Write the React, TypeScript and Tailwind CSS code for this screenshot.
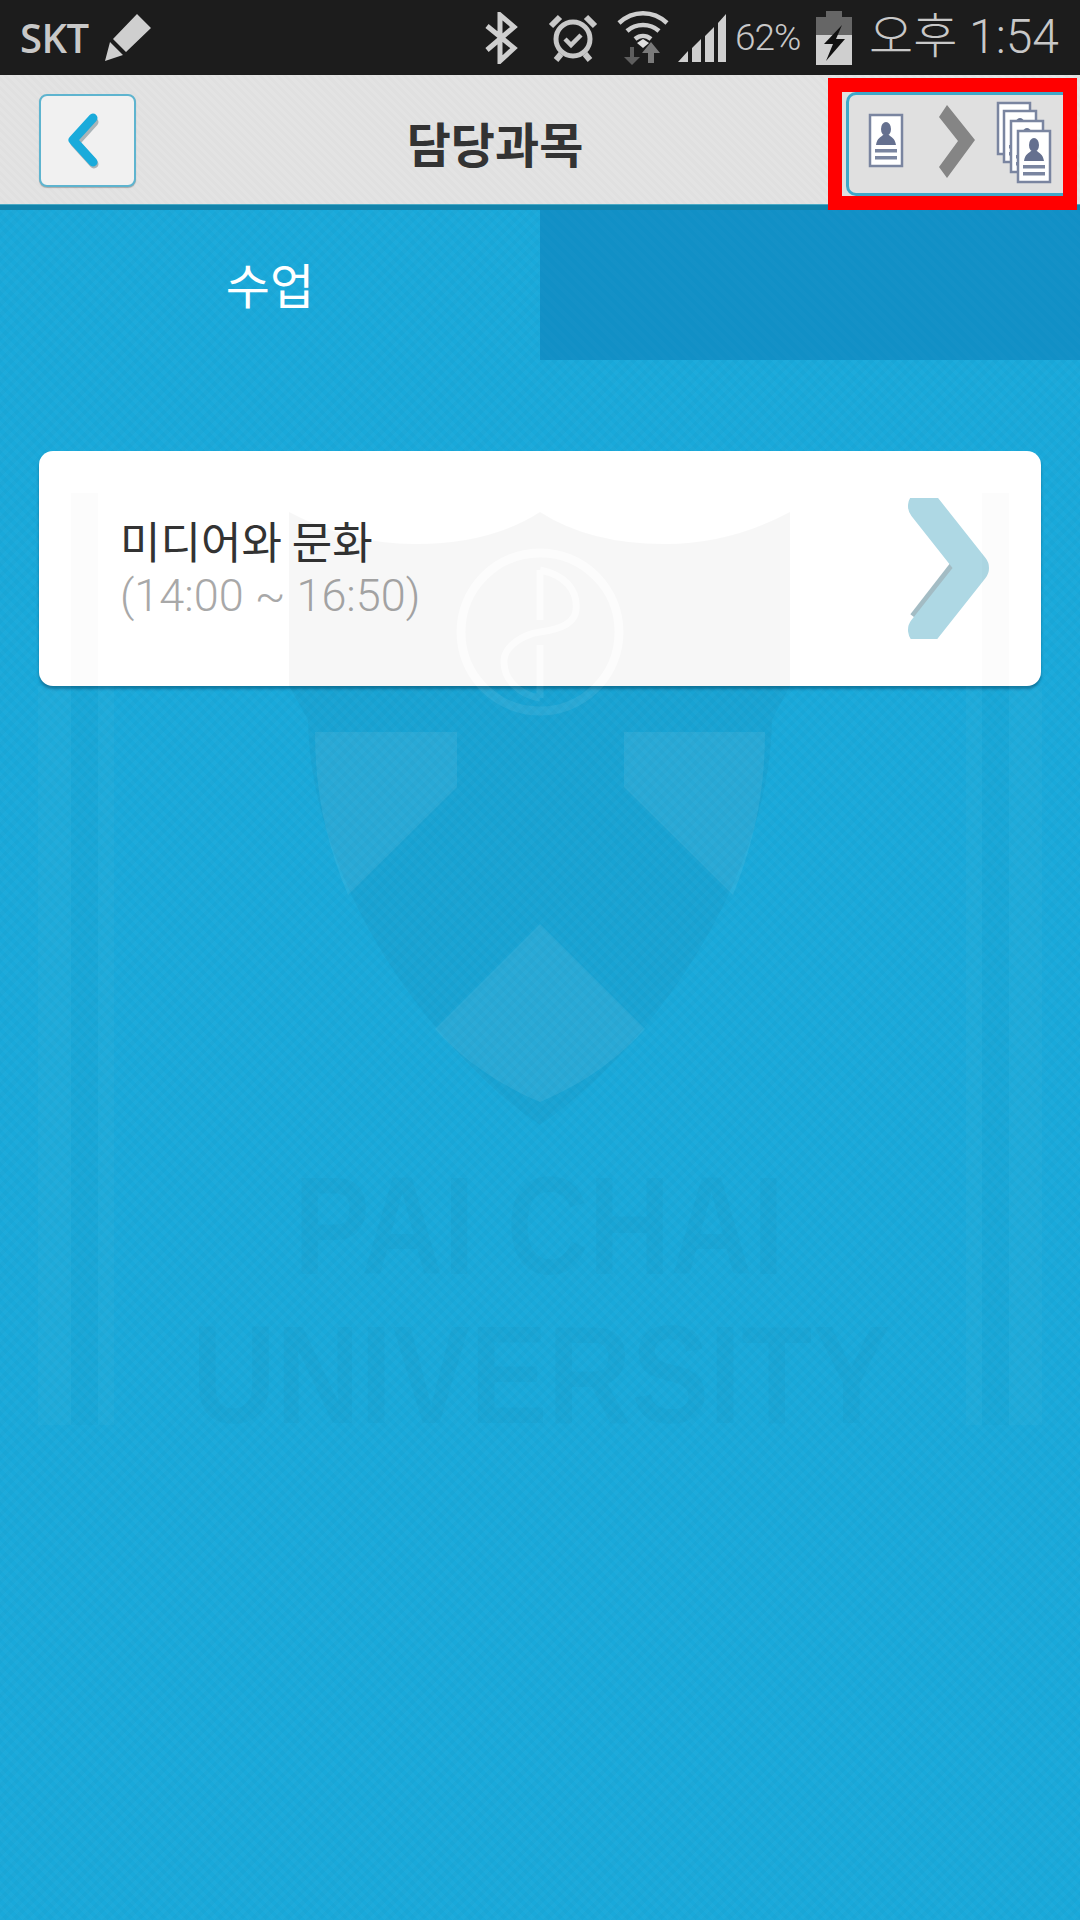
import React from 'react';

const KR = "font-['Noto_Sans_CJK_KR',sans-serif]";

const PersonCard = ({ x, y }: { x: number; y: number }) => (
  <g transform={`translate(${x} ${y})`}>
    <rect x="1" y="1" width="32" height="51" fill="#fff" stroke="#7a85a0" strokeWidth="2.5" />
    <ellipse cx="17" cy="15" rx="5" ry="7" fill="#65708f" />
    <path d="M7 31 C8 24 12 23 14 21 L20 21 C22 23 26 24 27 31 Z" fill="#65708f" />
    <rect x="6" y="35" width="22" height="3.5" fill="#7a85a0" />
    <rect x="6" y="42" width="22" height="3.5" fill="#7a85a0" />
  </g>
);

const EMBLEM_LINES =
  'M540 570 L540 620 M540 570 C565 575 578 590 576 610 C575 625 555 630 540 632 C525 634 505 645 504 660 C503 680 520 695 540 698 M540 645 L540 698';

const Watermark = () => (
  <svg className="absolute left-0 top-0 pointer-events-none" width="1080" height="1920" viewBox="0 0 1080 1920">
    <defs>
      <clipPath id="on-card">
        <rect x="39" y="451" width="1002" height="235" />
      </clipPath>
      <clipPath id="off-card">
        <rect x="0" y="686" width="1080" height="1234" />
      </clipPath>
    </defs>
    {/* side stripes */}
    <g fill="#fff" fillOpacity="0.025">
      <rect x="38" y="686" width="33" height="739" />
      <rect x="98" y="686" width="16" height="739" />
      <rect x="966" y="686" width="16" height="739" />
      <rect x="1009" y="686" width="33" height="739" />
    </g>
    <g fill="#000" fillOpacity="0.012">
      <rect x="71" y="493" width="27" height="932" />
      <rect x="982" y="493" width="27" height="932" />
    </g>
    {/* shield */}
    <path
      d="M289 512 Q350 544 415 544 Q490 544 540 512 Q590 544 665 544 Q730 544 790 512 L790 686 L772 720 C770 880 650 1050 540 1125 C430 1050 310 880 308 720 L289 686 Z"
      fill="#000"
      fillOpacity="0.03"
    />
    <g fill="#fff" fillOpacity="0.07">
      <path d="M315 732 L457 732 L457 787 L348 895 C325 840 315 790 315 732 Z" />
      <path d="M765 732 L624 732 L624 787 L733 895 C755 840 765 790 765 732 Z" />
      <path d="M540 924 L645 1029 C615 1062 580 1085 540 1102 C500 1085 465 1062 435 1029 Z" />
    </g>
    {/* emblem ring, stronger on the white card than on the blue */}
    <g fill="none" stroke="#fff" strokeOpacity="0.6" clipPath="url(#on-card)">
      <circle cx="540" cy="632" r="79" strokeWidth="9" />
      <path d={EMBLEM_LINES} strokeWidth="7" />
    </g>
    <g fill="none" stroke="#fff" strokeOpacity="0.07" clipPath="url(#off-card)">
      <circle cx="540" cy="632" r="79" strokeWidth="9" />
      <path d={EMBLEM_LINES} strokeWidth="7" />
    </g>
    {/* faint name */}
    <g fill="#000" fillOpacity="0.018" fontFamily="'Liberation Sans', sans-serif" fontWeight="700" fontSize="140">
      <text x="294" y="1274" textLength="490" lengthAdjust="spacingAndGlyphs">PAI CHAI</text>
      <text x="192" y="1423" textLength="698" lengthAdjust="spacingAndGlyphs">UNIVERSITY</text>
    </g>
  </svg>
);

const StatusBar = () => (
  <div className="h-[75px] bg-[#1c1c1c] flex items-center text-[#c8c8c8] shrink-0">
    <span className="ml-[20px] w-[71px] text-[40px] font-semibold font-['Open_Sans',sans-serif] leading-none tracking-[-0.5px]">SKT</span>
    <svg className="ml-[14px]" width="46" height="48" viewBox="0 0 46 48">
      <path d="M32 0 L46 14 L21 38 L8 25 Z M5 28 L18 41 L0 47 Z" fill="#cfcfcf" />
    </svg>
    <svg className="ml-[333px]" width="34" height="52" viewBox="0 0 34 52">
      <path d="M3 14 L30 36 L16 49 L16 3 L30 15 L3 38" fill="none" stroke="#cfcfcf" strokeWidth="5" />
    </svg>
    <svg className="ml-[30px]" width="50" height="50" viewBox="0 0 50 50">
      <circle cx="25" cy="26" r="17" fill="none" stroke="#c8c8c8" strokeWidth="5" />
      <path d="M17 26 L23 32 L33 22" fill="none" stroke="#c8c8c8" strokeWidth="4.5" />
      <path d="M3 13 L12 4 M47 13 L38 4 M13 41 L8 47 M37 41 L42 47" stroke="#c8c8c8" strokeWidth="6" />
    </svg>
    <svg className="ml-[19px]" width="52" height="54" viewBox="0 0 52 54">
      <g fill="none" stroke="#cfcfcf" strokeWidth="4.5">
        <path d="M2 12 C16 -1 36 -1 50 12" />
        <path d="M10 20 C19 12 33 12 42 20" />
        <path d="M18 28 C23 24 29 24 34 28" />
      </g>
      <path d="M20 32 L26 28 L32 32 L26 37 Z" fill="#e0e0e0" />
      <path d="M17 36 L17 46 L23 46 L15 54 L7 46 L13 46 L13 36 Z" fill="#5e5e5e" />
      <path d="M31 52 L31 42 L25 42 L34 31 L43 42 L37 42 L37 52 Z" fill="#7a7a7a" />
    </svg>
    <svg className="ml-[9px]" width="48" height="48" viewBox="0 0 48 48">
      <path d="M0 48 L10 48 L10 37 Z M14 48 L23 48 L23 25 L14 34 Z M27 48 L36 48 L36 13 L27 22 Z M40 48 L48 48 L48 0 L40 9 Z" fill="#cfcfcf" />
    </svg>
    <span className="ml-[9px] w-[65px] text-[37px] font-['Roboto',sans-serif] font-light leading-none tracking-[-1px]">62%</span>
    <svg className="ml-[16px]" width="36" height="54" viewBox="0 0 36 54">
      <path d="M10 0 L26 0 L26 6 L36 6 L36 54 L0 54 L0 6 L10 6 Z" fill="#666" />
      <rect x="0" y="24" width="36" height="30" fill="#cfcfcf" />
      <path d="M26 14 L8 33 L17 33 L10 50 L29 28 L20 28 Z" fill="#111" />
    </svg>
    <span className="ml-[17px] mb-[2px] text-[48px] font-['Roboto','Noto_Sans_CJK_KR',sans-serif] font-light leading-none whitespace-nowrap">오후 1:54</span>
  </div>
);

export default function App() {
  return (
    <div className="relative w-[1080px] h-[1920px] overflow-hidden flex flex-col bg-[#19a9da] bg-[repeating-linear-gradient(45deg,rgba(255,255,255,0.018)_0_4px,transparent_4px_8px),repeating-linear-gradient(-45deg,rgba(0,0,0,0.018)_0_4px,transparent_4px_8px)]">
      <StatusBar />

      {/* header */}
      <div className="h-[129px] shrink-0 flex items-center bg-[#e0e0e0] bg-[repeating-linear-gradient(45deg,rgba(255,255,255,0.1)_0_3px,transparent_3px_6px)] pr-[252px]">
        <button className="ml-[39px] mt-[2px] w-[97px] h-[93px] rounded-[8px] border-2 border-[#5eb4cf] bg-[#f1f1f1] flex items-center justify-center shadow-[0_1px_1px_rgba(0,0,0,0.25)]">
          <svg className="mr-[8px]" width="36" height="58" viewBox="0 0 36 58">
            <path d="M27 8 L8 29 L27 50" transform="translate(1 2)" fill="none" stroke="#a9b4b8" strokeWidth="9" strokeLinecap="round" strokeLinejoin="round" />
            <path d="M27 6 L7 28 L27 50" fill="none" stroke="#1aabdb" strokeWidth="9" strokeLinecap="round" strokeLinejoin="round" />
          </svg>
        </button>
        <h1 className={`flex-1 text-center mt-[4px] text-[48px] font-bold text-[#333] ${KR} leading-none pl-[26px]`}>담당과목</h1>
      </div>
      <div className="h-[6px] shrink-0 bg-[#1283ab] border-t border-[#4aa9c4]" />

      {/* tabs */}
      <div className="grid grid-cols-2 h-[150px] shrink-0">
        <div className={`flex items-center justify-center pb-[4px] text-white text-[48px] ${KR}`}>수업</div>
        <div className="bg-[#1190c6] bg-[repeating-linear-gradient(45deg,rgba(255,255,255,0.012)_0_4px,transparent_4px_8px)]" />
      </div>

      {/* course card */}
      <div className="mt-[91px] ml-[39px] w-[1002px] h-[235px] rounded-[14px] bg-white shadow-[0_3px_3px_rgba(0,60,90,0.45)] flex items-center justify-between pl-[81px] pr-[50px] shrink-0">
        <div className="flex flex-col">
          <span className={`text-[44px] leading-[54px] text-[#333] ${KR}`}>미디어와 문화</span>
          <span className="text-[45px] leading-[58px] text-[#a8a8a8] font-['Roboto',sans-serif] font-light">(14:00 ~ 16:50)</span>
        </div>
        <svg width="84" height="141" viewBox="0 0 84 141">
          <path d="M60 74 L18 128" transform="translate(-2 -2)" fill="none" stroke="#a3bcc4" strokeWidth="32" />
          <path d="M17 8 L66 70 L17 132" fill="none" stroke="#aed8e4" strokeWidth="32" strokeLinecap="round" strokeLinejoin="round" />
        </svg>
      </div>

      <Watermark />

      {/* red highlight round the mode button */}
      <div className="absolute left-[828px] top-[78px] w-[249px] h-[132px] border-[14px] border-[#ff0000] bg-[#e0e0e0]">
        <div className="h-full ml-[4px] rounded-l-[10px] border-[3px] border-r-0 border-[#3fa8c9]">
          <svg width="215" height="98" viewBox="0 0 215 98">
            <PersonCard x="20" y="19" />
            <path d="M98 10 L126 45 L98 83 L90 72 L109 46 L90 22 Z" fill="#858585" />
            <PersonCard x="148" y="7" />
            <PersonCard x="154" y="15" />
            <PersonCard x="161" y="25" />
            <PersonCard x="168" y="35" />
          </svg>
        </div>
      </div>
    </div>
  );
}
